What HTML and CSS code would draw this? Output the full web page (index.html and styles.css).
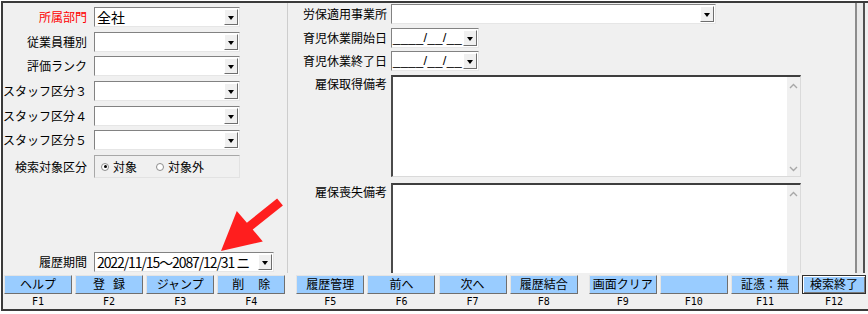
FILE: index.html
```html
<!DOCTYPE html>
<html lang="ja">
<head>
  <meta charset="UTF-8" />
  <title>雇用保険 履歴</title>
  <link rel="stylesheet" href="styles.css">
</head>
<body>

  <div class="window">

    <!-- 入力エリア -->
    <div class="form-area">

      <div class="pane-left">
        <div class="field-row">
          <span class="field-label required">所属部門</span>
          <div class="combo"><span class="combo-text big">全社</span><span class="drop-btn"></span></div>
        </div>
        <div class="field-row">
          <span class="field-label">従業員種別</span>
          <div class="combo"><span class="combo-text"></span><span class="drop-btn"></span></div>
        </div>
        <div class="field-row">
          <span class="field-label">評価ランク</span>
          <div class="combo"><span class="combo-text"></span><span class="drop-btn"></span></div>
        </div>
        <div class="field-row">
          <span class="field-label">スタッフ区分３</span>
          <div class="combo"><span class="combo-text"></span><span class="drop-btn"></span></div>
        </div>
        <div class="field-row">
          <span class="field-label">スタッフ区分４</span>
          <div class="combo"><span class="combo-text"></span><span class="drop-btn"></span></div>
        </div>
        <div class="field-row">
          <span class="field-label">スタッフ区分５</span>
          <div class="combo"><span class="combo-text"></span><span class="drop-btn"></span></div>
        </div>
        <div class="field-row radio-row">
          <span class="field-label">検索対象区分</span>
          <div class="radio-group">
            <span class="radio checked"></span><span class="radio-text">対象</span>
            <span class="radio second"></span><span class="radio-text">対象外</span>
          </div>
        </div>

        <div class="field-row period-row">
          <span class="field-label">履歴期間</span>
          <div class="combo combo-period"><span class="combo-text period">2022/11/15～2087/12/31 ニ</span><span class="drop-btn"></span></div>
        </div>
      </div>

      <div class="pane-right">
        <div class="field-row">
          <span class="field-label">労保適用事業所</span>
          <div class="combo combo-wide"><span class="combo-text"></span><span class="drop-btn"></span></div>
        </div>
        <div class="field-row">
          <span class="field-label">育児休業開始日</span>
          <div class="combo combo-date"><span class="combo-text date">____/__/__</span><span class="drop-btn"></span></div>
        </div>
        <div class="field-row">
          <span class="field-label">育児休業終了日</span>
          <div class="combo combo-date"><span class="combo-text date">____/__/__</span><span class="drop-btn"></span></div>
        </div>
        <div class="field-row memo-row">
          <span class="field-label">雇保取得備考</span>
          <div class="memo">
            <div class="memo-body"></div>
            <div class="memo-scroll">
              <svg width="9" height="6" viewBox="0 0 9 6"><polyline points="1,5 4.5,1.5 8,5" fill="none" stroke="#a8a8a8" stroke-width="1.4"/></svg>
              <svg width="9" height="6" viewBox="0 0 9 6"><polyline points="1,1 4.5,4.5 8,1" fill="none" stroke="#a8a8a8" stroke-width="1.4"/></svg>
            </div>
          </div>
        </div>
        <div class="field-row memo-row second-memo">
          <span class="field-label">雇保喪失備考</span>
          <div class="memo memo-tall">
            <div class="memo-body"></div>
            <div class="memo-scroll">
              <svg width="9" height="6" viewBox="0 0 9 6"><polyline points="1,5 4.5,1.5 8,5" fill="none" stroke="#a8a8a8" stroke-width="1.4"/></svg>
            </div>
          </div>
        </div>
      </div>

      <div class="frame-edge"></div>
    </div>

    <!-- ファンクションキー -->
    <div class="fkey-bar">
      <div class="fkey"><div class="fkey-btn">ヘルプ</div><div class="fkey-name">F1</div></div>
      <div class="fkey"><div class="fkey-btn">登<span class="gap"></span>録</div><div class="fkey-name">F2</div></div>
      <div class="fkey"><div class="fkey-btn">ジャンプ</div><div class="fkey-name">F3</div></div>
      <div class="fkey"><div class="fkey-btn">削<span class="gap wide"></span>除</div><div class="fkey-name">F4</div></div>
      <div class="fkey group-start"><div class="fkey-btn">履歴管理</div><div class="fkey-name">F5</div></div>
      <div class="fkey"><div class="fkey-btn">前へ</div><div class="fkey-name">F6</div></div>
      <div class="fkey"><div class="fkey-btn">次へ</div><div class="fkey-name">F7</div></div>
      <div class="fkey"><div class="fkey-btn">履歴結合</div><div class="fkey-name">F8</div></div>
      <div class="fkey group-start"><div class="fkey-btn">画面クリア</div><div class="fkey-name">F9</div></div>
      <div class="fkey"><div class="fkey-btn"></div><div class="fkey-name">F10</div></div>
      <div class="fkey"><div class="fkey-btn">証憑：無</div><div class="fkey-name">F11</div></div>
      <div class="fkey last"><div class="fkey-btn focused">検索終了</div><div class="fkey-name">F12</div></div>
    </div>

  </div>

  <!-- 注釈の矢印 -->
  <svg class="arrow" width="868" height="314" viewBox="0 0 868 314">
    <polygon points="221,251 236.8,211 246.9,222.8 277.1,198.6 282.9,205.4 252.7,229.6 262.8,241.4" fill="#ff1e1e"/>
  </svg>

</body>
</html>
```

FILE: styles.css
```css
body {
  margin: 0;
  width: 868px;
  height: 314px;
  overflow: hidden;
  position: relative;
  background-color: #ffffff;
  font-family: "Noto Sans CJK JP", sans-serif;
  font-size: 12px;
  color: #000000;
}

.window {
  margin: 1px 0 0 1px;
  width: 867px;
  height: 310px;
  box-sizing: border-box;
  border-top: 2px solid #3a3a3a;
  border-left: 2px solid #3a3a3a;
  border-bottom: 2px solid #3a3a3a;
  background-color: #f0f0f0;
  display: flex;
  flex-direction: column;
}

.form-area {
  display: flex;
  height: 270px;
  overflow: hidden;
}

/* 左側 */
.pane-left {
  width: 284px;
  border-right: 1px solid #cdcdcd;
  display: flex;
  flex-direction: column;
  padding: 4px 0 1px 0;
}

.field-row {
  display: flex;
  align-items: center;
  gap: 7px;
  height: 20px;
  margin-bottom: 4.7px;
  flex: none;
}

.field-label {
  width: 84px;
  text-align: right;
  white-space: nowrap;
  line-height: 16px;
  flex: none;
}

.required {
  color: #ff0000;
}

.combo {
  width: 146px;
  height: 20px;
  box-sizing: border-box;
  background-color: #ffffff;
  border-top: 1px solid #828282;
  border-left: 1px solid #828282;
  border-right: 1px solid #e6e6e6;
  border-bottom: 1px solid #e6e6e6;
  display: flex;
  align-items: stretch;
  position: relative;
  flex: none;
}

.combo-text {
  flex: 1;
  min-width: 0;
  overflow: hidden;
  white-space: nowrap;
  padding-left: 2px;
  line-height: 17px;
}

.combo-text.big {
  font-size: 14px;
  line-height: 18px;
}

.combo-text.period {
  flex: none;
  width: 156px;
  font-size: 14px;
  letter-spacing: -1.1px;
  line-height: 18px;
}

.combo-text.date {
  font-family: "Liberation Sans", sans-serif;
  font-size: 13px;
  letter-spacing: 0.4px;
  padding-left: 1px;
}

.drop-btn {
  width: 14px;
  margin: 1px 1px 1px auto;
  box-sizing: border-box;
  background-color: #f0f0f0;
  border: 1px solid;
  border-color: #ffffff #6e6e6e #6e6e6e #ffffff;
  position: relative;
  flex: none;
}

.drop-btn::after {
  content: "";
  position: absolute;
  left: 3px;
  top: 6px;
  border-left: 3.5px solid transparent;
  border-right: 3.5px solid transparent;
  border-top: 4px solid #000000;
}

.radio-row {
  height: 23px;
}

.radio-group {
  width: 146px;
  height: 23px;
  box-sizing: border-box;
  border: 1px solid;
  border-color: #a8a8a8 #e2e2e2 #e2e2e2 #a8a8a8;
  display: flex;
  align-items: center;
  padding-left: 6px;
}

.radio {
  width: 8px;
  height: 8px;
  box-sizing: border-box;
  border-radius: 50%;
  border: 1px solid #8c8c8c;
  background-color: #ffffff;
  position: relative;
  flex: none;
}

.radio.checked::after {
  content: "";
  position: absolute;
  left: 1.5px;
  top: 1.5px;
  width: 3px;
  height: 3px;
  border-radius: 50%;
  background-color: #000000;
}

.radio.second {
  margin-left: 19px;
}

.radio-text {
  margin-left: 4px;
  line-height: 16px;
}

.period-row {
  margin-top: auto;
  margin-bottom: 0;
}

.combo-period {
  width: 180px;
  overflow: hidden;
}

/* 右側 */
.pane-right {
  width: 567px;
  display: flex;
  flex-direction: column;
  padding-top: 1px;
}

.pane-right .field-row {
  gap: 4px;
  margin-bottom: 3.7px;
}

.pane-right .field-label {
  width: 99px;
}

.combo-wide {
  width: 325px;
}

.combo-date {
  width: 88px;
}

.memo-row {
  align-items: flex-start;
  height: auto;
}

.memo-row .field-label {
  padding-top: 1px;
}

.second-memo {
  margin-top: 2.3px;
}

.memo {
  width: 410px;
  height: 102px;
  box-sizing: border-box;
  background-color: #ffffff;
  border-top: 2px solid #3e3e3e;
  border-left: 2px solid #4a4a4a;
  border-right: 1px solid #dadada;
  border-bottom: 1px solid #dadada;
  display: flex;
}

.memo-tall {
  height: 130px;
}

.memo-body {
  flex: 1;
}

.memo-scroll {
  width: 13px;
  background-color: #f0f0f0;
  display: flex;
  flex-direction: column;
  justify-content: space-between;
  align-items: center;
  padding: 6px 0 4px 0;
}

.memo-tall .memo-scroll {
  justify-content: flex-start;
}

.frame-edge {
  width: 10px;
  box-sizing: border-box;
  border-left: 2px solid #8c8c8c;
  border-right: 2px solid #505050;
  background-color: #e9e9e9;
}

/* ファンクションキー */
.fkey-bar {
  display: flex;
  gap: 3.1px;
  padding: 2px 0 0 1px;
  height: 36px;
  box-sizing: border-box;
}

.fkey {
  width: 68px;
  display: flex;
  flex-direction: column;
  flex: none;
}

.fkey.group-start {
  margin-left: 8px;
}

.fkey.last {
  width: 64px;
}

.fkey-btn {
  height: 19px;
  box-sizing: border-box;
  background-color: #99ccff;
  border: 1px solid;
  border-color: #e4e4e4 #6f6f6f #6f6f6f #e4e4e4;
  text-align: center;
  line-height: 16px;
  white-space: nowrap;
}

.fkey-btn.focused {
  border-color: #303030;
  box-shadow: inset 1px 1px 0 #ffffff, inset -1px -1px 0 #7a7a7a;
}

.gap {
  display: inline-block;
  width: 8px;
}

.gap.wide {
  width: 14px;
}

.fkey-name {
  height: 15px;
  line-height: 15px;
  text-align: center;
  font-family: "DejaVu Sans Mono", monospace;
  font-size: 10px;
}

.arrow {
  position: absolute;
  left: 0;
  top: 0;
  pointer-events: none;
}
```
